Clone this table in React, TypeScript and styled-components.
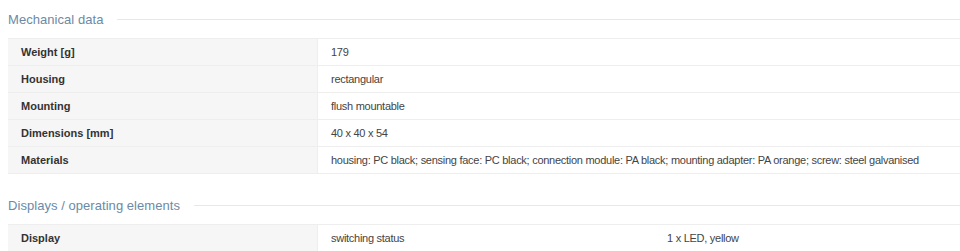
import React from "react";
import styled, { createGlobalStyle } from "styled-components";

const Global = createGlobalStyle`
  html, body { margin: 0; padding: 0; background: #fff; }
  body { padding: 0 0 0 8px; font-family: "Liberation Sans", Arial, sans-serif; color: #333; }
`;

const Page = styled.div`
  display: flex;
  flex-direction: column;
`;

const Section = styled.section`
  display: flex;
  flex-direction: column;
  margin-bottom: 12px;
`;

const Heading = styled.div`
  display: flex;
  align-items: center;
  gap: 14px;
  height: 38px;
  font-size: 13px;
  letter-spacing: 0.05px;
  color: #6b8aa6;
  &::after {
    content: "";
    flex: 1;
    height: 1px;
    background: #e8e8e8;
  }
`;

const Table = styled.table`
  width: 952px;
  border-collapse: collapse;
  font-size: 11px;
  letter-spacing: -0.27px;
  table-layout: fixed;
`;

const Row = styled.tr`
  height: 27px;
  border-top: 1px solid #eeeeee;
  border-bottom: 1px solid #eeeeee;
`;

const Label = styled.th`
  width: 284px;
  background: #f6f6f6;
  text-align: left;
  font-weight: bold;
  color: #333;
  padding: 0 12px 0 13px;
  letter-spacing: 0;
  border-right: 1px solid #eeeeee;
`;

const Value = styled.td<{ $w?: number }>`
  padding: 0 12px 0 13px;
  color: #444;
  white-space: nowrap;
  ${(p) => (p.$w ? `width: ${p.$w}px;` : "")}
`;

const mech: [string, string][] = [
  ["Weight [g]", "179"],
  ["Housing", "rectangular"],
  ["Mounting", "flush mountable"],
  ["Dimensions [mm]", "40 x 40 x 54"],
  [
    "Materials",
    "housing: PC black; sensing face: PC black; connection module: PA black; mounting adapter: PA orange; screw: steel galvanised",
  ],
];

export default function App() {
  return (
    <Page>
      <Global />
      <Section>
        <Heading>Mechanical data</Heading>
        <Table>
          <tbody>
            {mech.map(([k, v]) => (
              <Row key={k}>
                <Label>{k}</Label>
                <Value>{v}</Value>
              </Row>
            ))}
          </tbody>
        </Table>
      </Section>
      <Section>
        <Heading>Displays / operating elements</Heading>
        <Table>
          <tbody>
            <Row>
              <Label>Display</Label>
              <Value $w={311}>switching status</Value>
              <Value>1 x LED, yellow</Value>
            </Row>
          </tbody>
        </Table>
      </Section>
    </Page>
  );
}
